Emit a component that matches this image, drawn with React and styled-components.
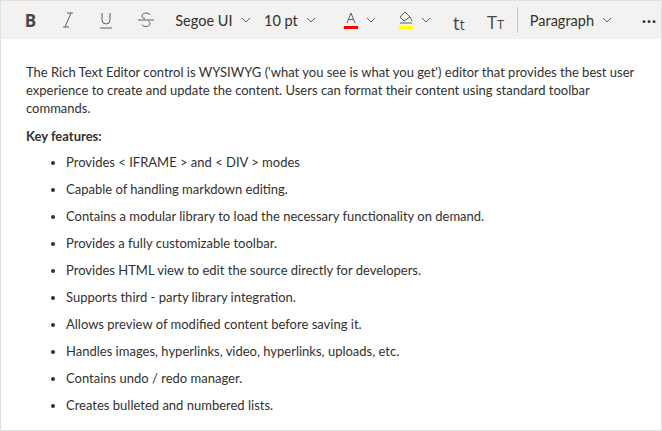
import React from "react";
import styled, { createGlobalStyle } from "styled-components";

const G = createGlobalStyle`
  body { margin: 0; font-family: "Segoe UI", "Lato", sans-serif; background: #fff; }
`;
const Editor = styled.div`
  width: 662px; height: 431px; box-sizing: border-box;
  border: 1px solid #e0e0e0; display: flex; flex-direction: column;
`;
const Toolbar = styled.div`
  height: 38px; background: #f3f2f1; display: flex; align-items: center;
  padding-left: 18px; color: #323130; flex-shrink: 0;
`;
const Btn = styled.div`
  width: ${p => p.w || 40}px; height: 32px; display: flex; align-items: center;
  justify-content: ${p => p.left ? "flex-start" : "center"}; font-size: 14.5px; gap: 8px;
  color: #323130;
`;
const Glyph = styled.div`
  width: ${p => p.w || 40}px; height: 32px; display: flex; align-items: baseline;
  justify-content: center; padding-top: 6px; box-sizing: border-box;
  font-family: "Open Sans", sans-serif; color: #484644; font-size: ${p => p.size}px;
  span { font-size: ${p => p.small}px; }
`;
const Sep = styled.div`width: 1px; height: 26px; background: #c8c6c4; margin: 0 8px 0 2px;`;
const Content = styled.div`
  padding: 14px 25px; font-size: 13px; color: #323130; line-height: 18px;
  p { margin: 0 0 8px; }
  ul { margin: 0; padding-left: 40px; }
  li { margin-bottom: 9px; }
`;
const Chev = () => (
  <svg width="10" height="6" viewBox="0 0 10 6"><path d="M1 1l4 4 4-4" fill="none" stroke="#605e5c" strokeWidth="1"/></svg>
);

export default function App() {
  return (
    <>
      <G />
      <Editor>
        <Toolbar>
          <Btn w={24} style={{ fontWeight: 700, fontSize: 17, color: "#484644", fontFamily: "Open Sans" }}>B</Btn>
          <Btn w={54}>
            <svg width="14" height="18" viewBox="0 0 14 18"><path d="M6 2h6M2 16h6M10 2L4 16" stroke="#605e5c" strokeWidth="1" fill="none"/></svg>
          </Btn>
          <Btn w={24}>
            <svg width="14" height="18" viewBox="0 0 14 18"><path d="M3 2v7a4 4 0 008 0V2M1 17h12" stroke="#605e5c" strokeWidth="1" fill="none"/></svg>
          </Btn>
          <Btn w={60}>
            <svg width="16" height="18" viewBox="0 0 16 18"><path d="M12 4c-1-2-3-2-4-2-2 0-4 1-4 3 0 1.5 1 2 3 2.5M10 10c1 .7 2 1.3 2 2.5 0 2-2 3-4 3-1.5 0-3.5-.5-4-2M0 9h16" stroke="#605e5c" strokeWidth="1" fill="none"/></svg>
          </Btn>
          <Btn w={92} left>Segoe UI <Chev /></Btn>
          <Btn w={72} left>10 pt <Chev /></Btn>
          <Btn w={56}>
            <svg width="14" height="18" viewBox="0 0 14 18"><path d="M3 12L7 2l4 10M4.5 8.5h5" stroke="#605e5c" strokeWidth="1" fill="none"/><rect x="0" y="15" width="14" height="3" fill="#f00"/></svg>
            <Chev />
          </Btn>
          <Btn w={56}>
            <svg width="14" height="18" viewBox="0 0 14 18"><path d="M6 1l-5 5 4 4 6-4zM11 6c1 2 2 3 2 4" stroke="#605e5c" strokeWidth="1" fill="none"/><path d="M1 12h12" stroke="#605e5c" strokeWidth="1"/><rect x="0" y="15" width="14" height="3" fill="#ff0"/></svg>
            <Chev />
          </Btn>
          <Glyph w={36} size={19} small={14}>t<span>t</span></Glyph>
          <Glyph w={40} size={18} small={13}>T<span>T</span></Glyph>
          <Sep />
          <Btn w={112} left style={{ paddingLeft: 4 }}>Paragraph <Chev /></Btn>
          <Btn w={24} style={{ fontWeight: 700, letterSpacing: 1 }}>···</Btn>
        </Toolbar>
        <Content>
          <p style={{ marginTop: 10, marginBottom: 10 }}>The Rich Text Editor control is WYSIWYG ('what you see is what you get') editor that provides the best user experience to create and update the content. Users can format their content using standard toolbar commands.</p>
          <p><b>Key features:</b></p>
          <ul>
            <li>Provides &lt; IFRAME &gt; and &lt; DIV &gt; modes</li>
            <li>Capable of handling markdown editing.</li>
            <li>Contains a modular library to load the necessary functionality on demand.</li>
            <li>Provides a fully customizable toolbar.</li>
            <li>Provides HTML view to edit the source directly for developers.</li>
            <li>Supports third - party library integration.</li>
            <li>Allows preview of modified content before saving it.</li>
            <li>Handles images, hyperlinks, video, hyperlinks, uploads, etc.</li>
            <li>Contains undo / redo manager.</li>
            <li>Creates bulleted and numbered lists.</li>
          </ul>
        </Content>
      </Editor>
    </>
  );
}
